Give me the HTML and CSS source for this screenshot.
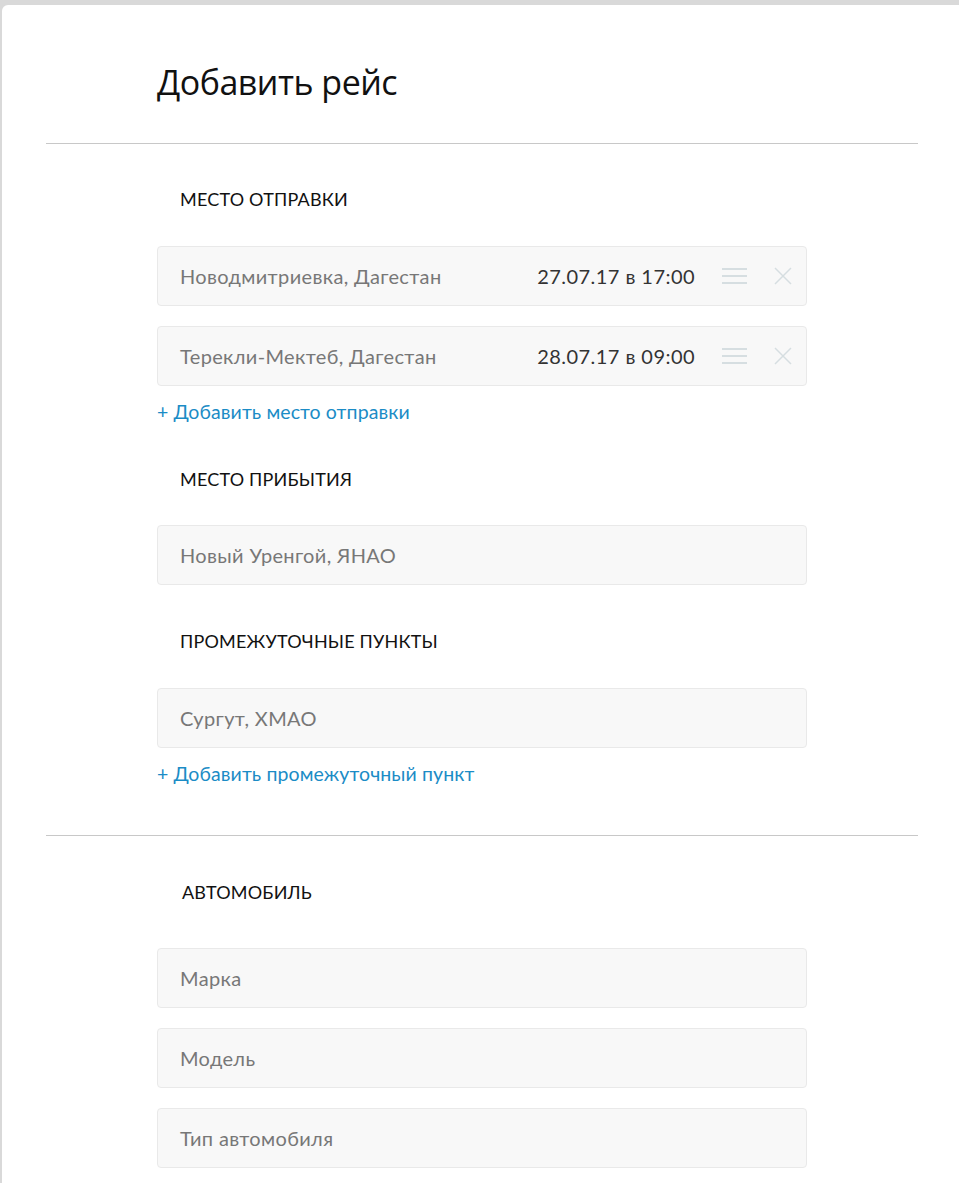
FILE: index.html
```html
<!DOCTYPE html>
<html lang="ru">
<head>
<meta charset="utf-8">
<title>Добавить рейс</title>
<link rel="stylesheet" href="styles.css">
</head>
<body>
<div class="card">
  <header class="head">
    <h1 class="title">Добавить рейс</h1>
  </header>
  <hr class="rule">
  <section class="group group-first">
    <h2 class="label">МЕСТО ОТПРАВКИ</h2>
    <div class="field field-row">
      <span class="value">Новодмитриевка, Дагестан</span>
      <span class="date">27.07.17 в 17:00</span>
      <svg class="ico-menu" width="25" height="18" viewBox="0 0 25 18"><path d="M0 2h25M0 9h25M0 16h25" stroke="#d6dee1" stroke-width="2"/></svg>
      <svg class="ico-close" width="18" height="18" viewBox="0 0 18 18"><path d="M1 1L17 17M17 1L1 17" stroke="#d6dee1" stroke-width="1.5"/></svg>
    </div>
    <div class="field field-row gap20">
      <span class="value">Терекли-Мектеб, Дагестан</span>
      <span class="date">28.07.17 в 09:00</span>
      <svg class="ico-menu" width="25" height="18" viewBox="0 0 25 18"><path d="M0 2h25M0 9h25M0 16h25" stroke="#d6dee1" stroke-width="2"/></svg>
      <svg class="ico-close" width="18" height="18" viewBox="0 0 18 18"><path d="M1 1L17 17M17 1L1 17" stroke="#d6dee1" stroke-width="1.5"/></svg>
    </div>
    <a class="add" href="#">+ Добавить место отправки</a>

    <h2 class="label label-next">МЕСТО ПРИБЫТИЯ</h2>
    <div class="field"><span class="value">Новый Уренгой, ЯНАО</span></div>

    <h2 class="label label-next2">ПРОМЕЖУТОЧНЫЕ ПУНКТЫ</h2>
    <div class="field"><span class="value">Сургут, ХМАО</span></div>
    <a class="add" href="#">+ Добавить промежуточный пункт</a>
  </section>
  <hr class="rule rule-2">
  <section class="group group-car">
    <h2 class="label label-car">АВТОМОБИЛЬ</h2>
    <div class="field field-car"><span class="value">Марка</span></div>
    <div class="field gap20"><span class="value">Модель</span></div>
    <div class="field gap20"><span class="value">Тип автомобиля</span></div>
  </section>
</div>
</body>
</html>
```

FILE: styles.css
```css
html, body {
  margin: 0;
  padding: 0;
  background: #d9d9d9;
}

body {
  padding: 5px 0 0 2px;
  font-family: Lato, "Noto Sans", sans-serif;
}

.card {
  background: #ffffff;
  border-top-left-radius: 6px;
  min-height: 1178px;
  padding-bottom: 40px;
}

.head {
  height: 138px;
  padding-left: 155px;
  box-sizing: border-box;
  padding-top: 57px;
}

.title {
  margin: 0;
  font-family: "Open Sans", "Noto Sans", sans-serif;
  font-weight: 400;
  font-size: 34px;
  line-height: 40px;
  color: #111;
  letter-spacing: -0.5px;
}

.rule {
  margin: 0 41px 0 44px;
  border: 0;
  height: 1px;
  background: #c8c8c8;
}

.rule-2 {
  margin-top: 50px;
}

.group {
  padding-left: 155px;
  width: 650px;
  display: flex;
  flex-direction: column;
  align-items: stretch;
}

.label {
  margin: 44px 0 36px 23px;
  font-size: 18px;
  line-height: 22px;
  font-weight: 400;
  color: #111;
  letter-spacing: 0.2px;
}

.label-next {
  margin-top: 45px;
  margin-bottom: 35px;
}

.label-next2 {
  margin-top: 45px;
  margin-bottom: 36px;
}

.label-car {
  margin-top: 45px;
  margin-bottom: 45px;
  margin-left: 25px;
}

.field {
  height: 60px;
  box-sizing: border-box;
  background: #f8f8f8;
  border: 1px solid #e9e9e9;
  border-radius: 4px;
  display: flex;
  align-items: center;
  padding: 0 14px 0 22px;
}

.gap20 {
  margin-top: 20px;
}

.value {
  font-size: 20px;
  letter-spacing: 0.35px;
  color: #777;
  flex: 1;
}

.date {
  font-size: 20px;
  letter-spacing: 0.45px;
  color: #333;
  margin-right: 27px;
}

.ico-menu {
  display: block;
  margin-right: 27px;
}

.ico-close {
  display: block;
}

.add {
  margin-top: 14px;
  font-size: 19.5px;
  line-height: 23px;
  letter-spacing: 0.1px;
  color: #1b8cc6;
  text-decoration: none;
  align-self: flex-start;
}
```
